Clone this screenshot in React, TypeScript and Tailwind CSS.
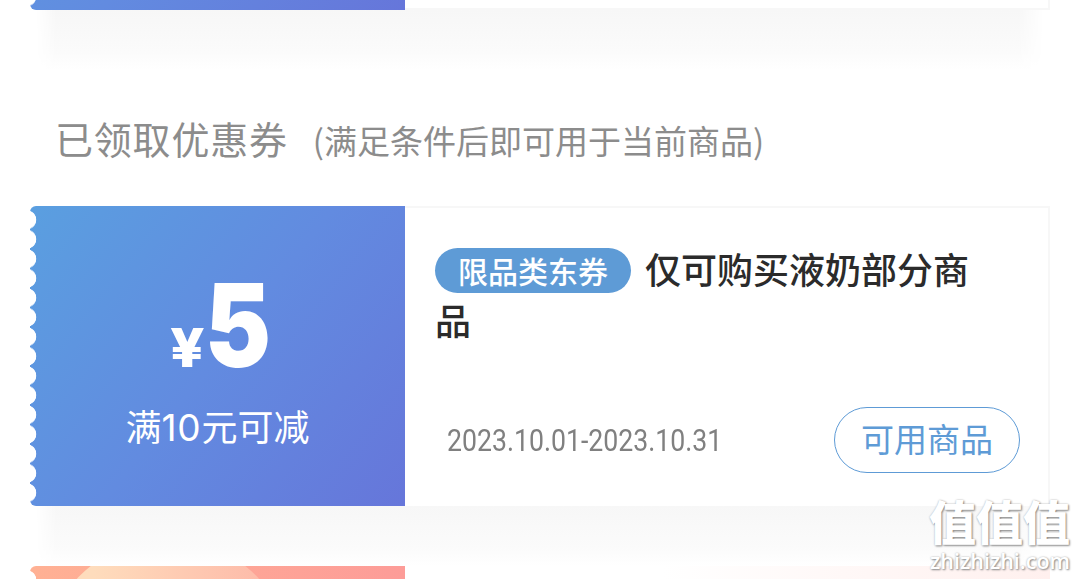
import type { ReactNode } from 'react';

const Notches = () => (
    <div className="absolute left-0 top-[4px] h-[293px] w-2 bg-[radial-gradient(circle_at_-3px_50%,#fff_9px,transparent_9.6px)] bg-[length:8px_19.5px] bg-repeat-y" />
);

const Shade = () => (
    <div className="h-[60px] mx-[36px] bg-linear-to-b from-[#f7f7f7] via-[#fbfbfb] via-70% to-white [mask-image:linear-gradient(to_right,transparent,#000_20px,#000_calc(100%-26px),transparent)]" />
);

const Header = () => (
    <div className="flex items-center h-[136px] pl-[55px] text-[#8c8c8c]">
        <h2 className="text-[38px] leading-[56px] tracking-[0.8px]">已领取优惠券</h2>
        <span className="ml-[25px] mt-[4px] text-[33px] leading-[48px]">(满足条件后即可用于当前商品)</span>
    </div>
);

const Stub = ({ children }: { children?: ReactNode }) => (
    <div className="relative w-[375px] h-[300px] shrink-0 rounded-l-[6px] overflow-hidden bg-linear-[128deg,#5a9fe0,#628be0_50%,#6676da] text-white flex flex-col items-center">
        <Notches />
        {children}
    </div>
);

const Coupon = () => (
    <div className="flex items-start mx-[30px] h-[300px]">
        <Stub>
            <div className="flex items-baseline mt-[60px] h-[120px] leading-[120px] pl-[3px] font-[Inter]">
                <span className="w-[35px] text-[53px] font-extrabold"><span className="inline-block origin-left scale-x-[1.13]">¥</span></span>
                <span className="w-[63px] text-[115px] font-black"><span className="inline-block origin-left scale-x-[0.86]">5</span></span>
            </div>
            <p className="text-[36px] leading-[52px] mt-[13px]">满<span className="font-[Inter] text-[37px] tracking-[0.8px]">10</span>元可减</p>
        </Stub>
        <div className="w-[645px] h-[299px] border-t-2 border-r-2 border-[#f7f7f7] bg-white pl-[30px] flex flex-col">
            <div className="mt-[35px] w-[560px] h-[105px] text-[36px] leading-[51px] font-medium text-[#2b2b2b]">
                <span className="inline-block align-[1px] w-[196px] h-[45px] mr-[14px] rounded-full bg-[#5e9bd6] text-center text-[30px] leading-[44px] text-white">限品类东券</span>
                仅可购买液奶部分商品
            </div>
            <div className="flex items-center justify-between mt-[59px] pl-[12px] pr-[28px]">
                <span className="inline-block mt-[3px] w-[273px] origin-left scale-x-[0.86] whitespace-nowrap font-[Roboto] text-[31px] text-[#808080]">2023.10.01-2023.10.31</span>
                <button className="w-[186px] h-[66px] pb-[4px] rounded-full border border-[#5e9bd6] text-[33px] leading-[60px] text-[#5e9bd6]">可用商品</button>
            </div>
        </div>
    </div>
);

const App = () => {
    return (
        <div className="relative w-[1080px] h-[579px] overflow-hidden bg-white font-['Noto_Sans_CJK_SC',sans-serif]">
            <div className="flex items-end h-[10px] mx-[30px] overflow-hidden">
                <Stub />
                <div className="w-[645px] h-[10px] border-b-2 border-r-2 border-[#f7f7f7]" />
            </div>
            <Shade />
            <Header />
            <Coupon />
            <Shade />
            <div className="flex mx-[30px] h-[13px]">
                <div className="relative w-[375px] h-[13px] overflow-hidden rounded-tl-[6px] bg-linear-to-r from-[#ffb194] to-[#fd9c98]">
                    <div className="absolute left-[14px] top-[-27px] w-[248px] h-[248px] rounded-full bg-linear-to-r from-[#fedcbc] from-20% to-[#fdb5a6]" />
                    <Notches />
                </div>
                <div className="w-[645px] bg-linear-to-r from-white from-40% to-[#fff0ee]" />
            </div>
            <div className="absolute left-[929px] top-[490px] w-[150px] text-white">
                <p className="h-[57px] text-[47px] leading-[60px] font-black whitespace-nowrap [text-shadow:1px_1px_2px_#888,0_0_2px_#bbb]">值值值</p>
                <p className="pl-[1px] text-[21.5px] leading-[28px] font-semibold font-['Open_Sans'] whitespace-nowrap [text-shadow:1px_1px_2px_#888,0_0_2px_#bbb]">zhizhizhi.com</p>
            </div>
        </div>
    );
};

export default App;
